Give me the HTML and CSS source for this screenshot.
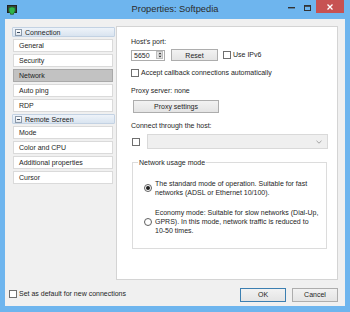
FILE: index.html
```html
<!DOCTYPE html>
<html lang="en">

<head>
    <meta charset="UTF-8">
    <title>Properties: Softpedia</title>
    <link rel="stylesheet" href="styles.css">
</head>

<body>

    <div class="window">
        <div class="titlebar">
            <div class="title-left">
                <svg class="app-icon" width="10" height="10" viewBox="0 0 10 10">
                    <rect x="0.5" y="0.5" width="9" height="7" fill="#3a3f3a" stroke="#1f231f" />
                    <rect x="3" y="8" width="4" height="1.5" fill="#3a3f3a" />
                    <path d="M5 2 L8 3 L8 5.5 Q8 8 5 9.5 Q2 8 2 5.5 L2 3 Z" fill="#2fb34a" stroke="#157a2a" stroke-width="0.6" />
                </svg>
            </div>
            <div class="title">Properties: Softpedia</div>
            <div class="caption-buttons">
                <div class="cap">
                    <svg width="7" height="2" viewBox="0 0 7 2"><rect width="7" height="1.4" fill="#333" /></svg>
                </div>
                <div class="cap">
                    <svg width="7" height="6" viewBox="0 0 7 6"><rect x="0.5" y="0.5" width="6" height="5" fill="none" stroke="#333" /><rect x="0.5" y="0.5" width="6" height="1.3" fill="#333" /></svg>
                </div>
                <div class="cap cap-close">
                    <svg width="6" height="6" viewBox="0 0 6 6"><path d="M0.5 0.5 L5.5 5.5 M5.5 0.5 L0.5 5.5" stroke="#fff" stroke-width="1.3" /></svg>
                </div>
            </div>
        </div>

        <div class="client">
            <div class="main">
                <div class="tree">
                    <div class="tree-group"><span class="collapse-box"></span>Connection</div>
                    <div class="tree-item">General</div>
                    <div class="tree-item">Security</div>
                    <div class="tree-item selected">Network</div>
                    <div class="tree-item">Auto ping</div>
                    <div class="tree-item">RDP</div>
                    <div class="tree-group"><span class="collapse-box"></span>Remote Screen</div>
                    <div class="tree-item">Mode</div>
                    <div class="tree-item">Color and CPU</div>
                    <div class="tree-item">Additional properties</div>
                    <div class="tree-item">Cursor</div>
                </div>

                <div class="page">
                    <div class="text-line">Host's port:</div>
                    <div class="port-row">
                        <div class="spin">
                            <span class="spin-value">5650</span>
                            <span class="spin-arrows">
                                <svg width="5" height="7" viewBox="0 0 5 7"><path d="M2.5 0.5 L4.5 2.7 L0.5 2.7 Z M2.5 6.5 L4.5 4.3 L0.5 4.3 Z" fill="#333" /></svg>
                            </span>
                        </div>
                        <button class="btn btn-reset">Reset</button>
                        <label class="check"><span class="box"></span>Use IPv6</label>
                    </div>
                    <label class="check check-callback"><span class="box"></span>Accept callback connections automatically</label>
                    <div class="text-line proxy-line">Proxy server: none</div>
                    <button class="btn btn-proxy">Proxy settings</button>
                    <div class="text-line host-line">Connect through the host:</div>
                    <div class="host-row">
                        <span class="box"></span>
                        <div class="combo">
                            <svg width="6" height="4" viewBox="0 0 6 4"><path d="M0.5 0.8 L3 3.2 L5.5 0.8" fill="none" stroke="#9a9a9a" stroke-width="0.9" /></svg>
                        </div>
                    </div>

                    <fieldset class="group">
                        <legend>Network usage mode</legend>
                        <div class="option">
                            <span class="radio checked"></span>
                            <span>The standard mode of operation. Suitable for fast<br>networks (ADSL or Ethernet 10/100).</span>
                        </div>
                        <div class="option option-economy">
                            <span class="radio"></span>
                            <span>Economy mode: Suitable for slow networks (Dial-Up,<br>GPRS). In this mode, network traffic is reduced to<br>10-50 times.</span>
                        </div>
                    </fieldset>
                </div>
            </div>

            <div class="footer">
                <label class="check"><span class="box"></span>Set as default for new connections</label>
                <div class="footer-buttons">
                    <button class="btn btn-ok">OK</button>
                    <button class="btn">Cancel</button>
                </div>
            </div>
        </div>
    </div>

</body>

</html>
```

FILE: styles.css
```css
body {
    margin: 0;
    font-family: "Liberation Sans", Arial, sans-serif;
    font-size: 7px;
    color: #1e1e1e;
}

.window {
    width: 350px;
    height: 312px;
    background-color: #6eb5ee;
    display: flex;
    flex-direction: column;
}

/* title bar */

.titlebar {
    height: 19px;
    display: grid;
    grid-template-columns: 1fr auto 1fr;
}

.title-left {
    padding: 5px 0 0 7px;
}

.app-icon {
    display: block;
}

.title {
    font-size: 9.3px;
    line-height: 19px;
    color: #2b2b2b;
}

.caption-buttons {
    display: flex;
    justify-content: flex-end;
    padding-right: 6px;
}

.cap {
    width: 16px;
    height: 13px;
    display: flex;
    align-items: center;
    justify-content: center;
    padding-top: 2px;
    box-sizing: border-box;
}

.cap-close {
    width: 28px;
    padding-top: 0;
    margin-left: 1px;
    background-color: #c75252;
}

/* client area */

.client {
    flex: 1;
    margin: 0 5px 6px;
    padding: 7px 7px 0;
    background-color: #f0f0f0;
    display: flex;
    flex-direction: column;
}

.main {
    height: 254px;
    display: flex;
}

.tree {
    width: 104px;
    padding-top: 1px;
}

.tree-group {
    width: 103px;
    height: 10px;
    box-sizing: border-box;
    margin-bottom: 2px;
    padding-left: 2px;
    display: flex;
    align-items: center;
    gap: 3px;
    background: linear-gradient(#eef3f9, #d9e4f0);
    border: 1px solid #c3d2e3;
    border-radius: 1px;
}

.collapse-box {
    width: 5px;
    height: 5px;
    border: 1px solid #8c9aab;
    background: linear-gradient(#ffffff, #e2e8ef);
    position: relative;
}

.collapse-box::after {
    content: "";
    position: absolute;
    left: 1px;
    top: 2px;
    width: 3px;
    height: 1px;
    background-color: #3d4e63;
}

.tree-item {
    width: 100px;
    height: 13px;
    margin: 0 0 2px 1px;
    box-sizing: border-box;
    padding-left: 5px;
    line-height: 11px;
    background-color: #fff;
    border: 1px solid #dadada;
}

.tree-item.selected {
    background-color: #c2c2c2;
    border-color: #a9a9a9;
}

/* right page */

.page {
    flex: 1;
    box-sizing: border-box;
    padding: 10px 0 0 14px;
    background-color: #fff;
    border: 1px solid #d4d4d4;
    display: flex;
    flex-direction: column;
    align-items: flex-start;
}

.text-line {
    line-height: 9px;
}

.port-row {
    margin-top: 3px;
    height: 12px;
    display: flex;
    align-items: center;
}

.spin {
    width: 34px;
    height: 11px;
    box-sizing: border-box;
    border: 1px solid #acacac;
    display: flex;
    align-items: center;
    justify-content: space-between;
    padding: 0 1px 0 2px;
}

.spin-arrows {
    width: 7px;
    height: 8px;
    background-color: #e4e4e4;
    border: 1px solid #bdbdbd;
    box-sizing: border-box;
    display: flex;
    align-items: center;
    justify-content: center;
}

.spin-arrows svg {
    width: 4px;
    height: 6px;
}

.btn {
    font-family: inherit;
    font-size: 7px;
    color: #1e1e1e;
    height: 14px;
    padding: 0;
    background: linear-gradient(#f2f2f2, #e4e4e4);
    border: 1px solid #adadad;
    border-radius: 0;
}

.btn-reset {
    width: 47px;
    height: 12px;
    margin-left: 6px;
}

.check {
    display: flex;
    align-items: center;
    gap: 2px;
    line-height: 10px;
}

.port-row .check {
    margin-left: 5px;
}

.box {
    width: 8px;
    height: 8px;
    box-sizing: border-box;
    border: 1px solid #6f6f6f;
    background-color: #fff;
}

.check-callback {
    margin-top: 7px;
}

.proxy-line {
    margin-top: 8px;
}

.btn-proxy {
    width: 86px;
    height: 13px;
    margin: 5px 0 0 2px;
}

.host-line {
    margin-top: 8px;
}

.host-row {
    margin-top: 4px;
    height: 15px;
    display: flex;
    align-items: center;
    gap: 7px;
    padding-left: 1px;
}

.combo {
    width: 181px;
    height: 15px;
    box-sizing: border-box;
    background-color: #efefef;
    border: 1px solid #d9d9d9;
    display: flex;
    align-items: center;
    justify-content: flex-end;
    padding-right: 5px;
}

.group {
    width: 195px;
    box-sizing: border-box;
    margin: 9px 0 0 1px;
    padding: 12px 0 13px 11px;
    border: 1px solid #dcdcdc;
    min-width: 0;
}

.group legend {
    padding: 0 1px;
    margin-left: -6px;
    line-height: 9px;
}

.option {
    display: flex;
    align-items: center;
    gap: 3px;
    line-height: 9px;
}

.option-economy {
    margin-top: 11px;
}

.radio {
    width: 8px;
    height: 8px;
    flex-shrink: 0;
    box-sizing: border-box;
    border: 1px solid #5f5f5f;
    border-radius: 50%;
    background-color: #fff;
    display: flex;
    align-items: center;
    justify-content: center;
}

.radio.checked::after {
    content: "";
    width: 4px;
    height: 4px;
    border-radius: 50%;
    background-color: #1e1e1e;
}

/* footer */

.footer {
    flex: 1;
    display: flex;
    align-items: center;
    justify-content: space-between;
    margin-left: -3px;
    padding-top: 2px;
}

.footer-buttons {
    display: flex;
    gap: 6px;
    padding-top: 1px;
}

.footer-buttons .btn {
    width: 46px;
}

.btn-ok {
    border-color: #3c7fb1;
}
```
